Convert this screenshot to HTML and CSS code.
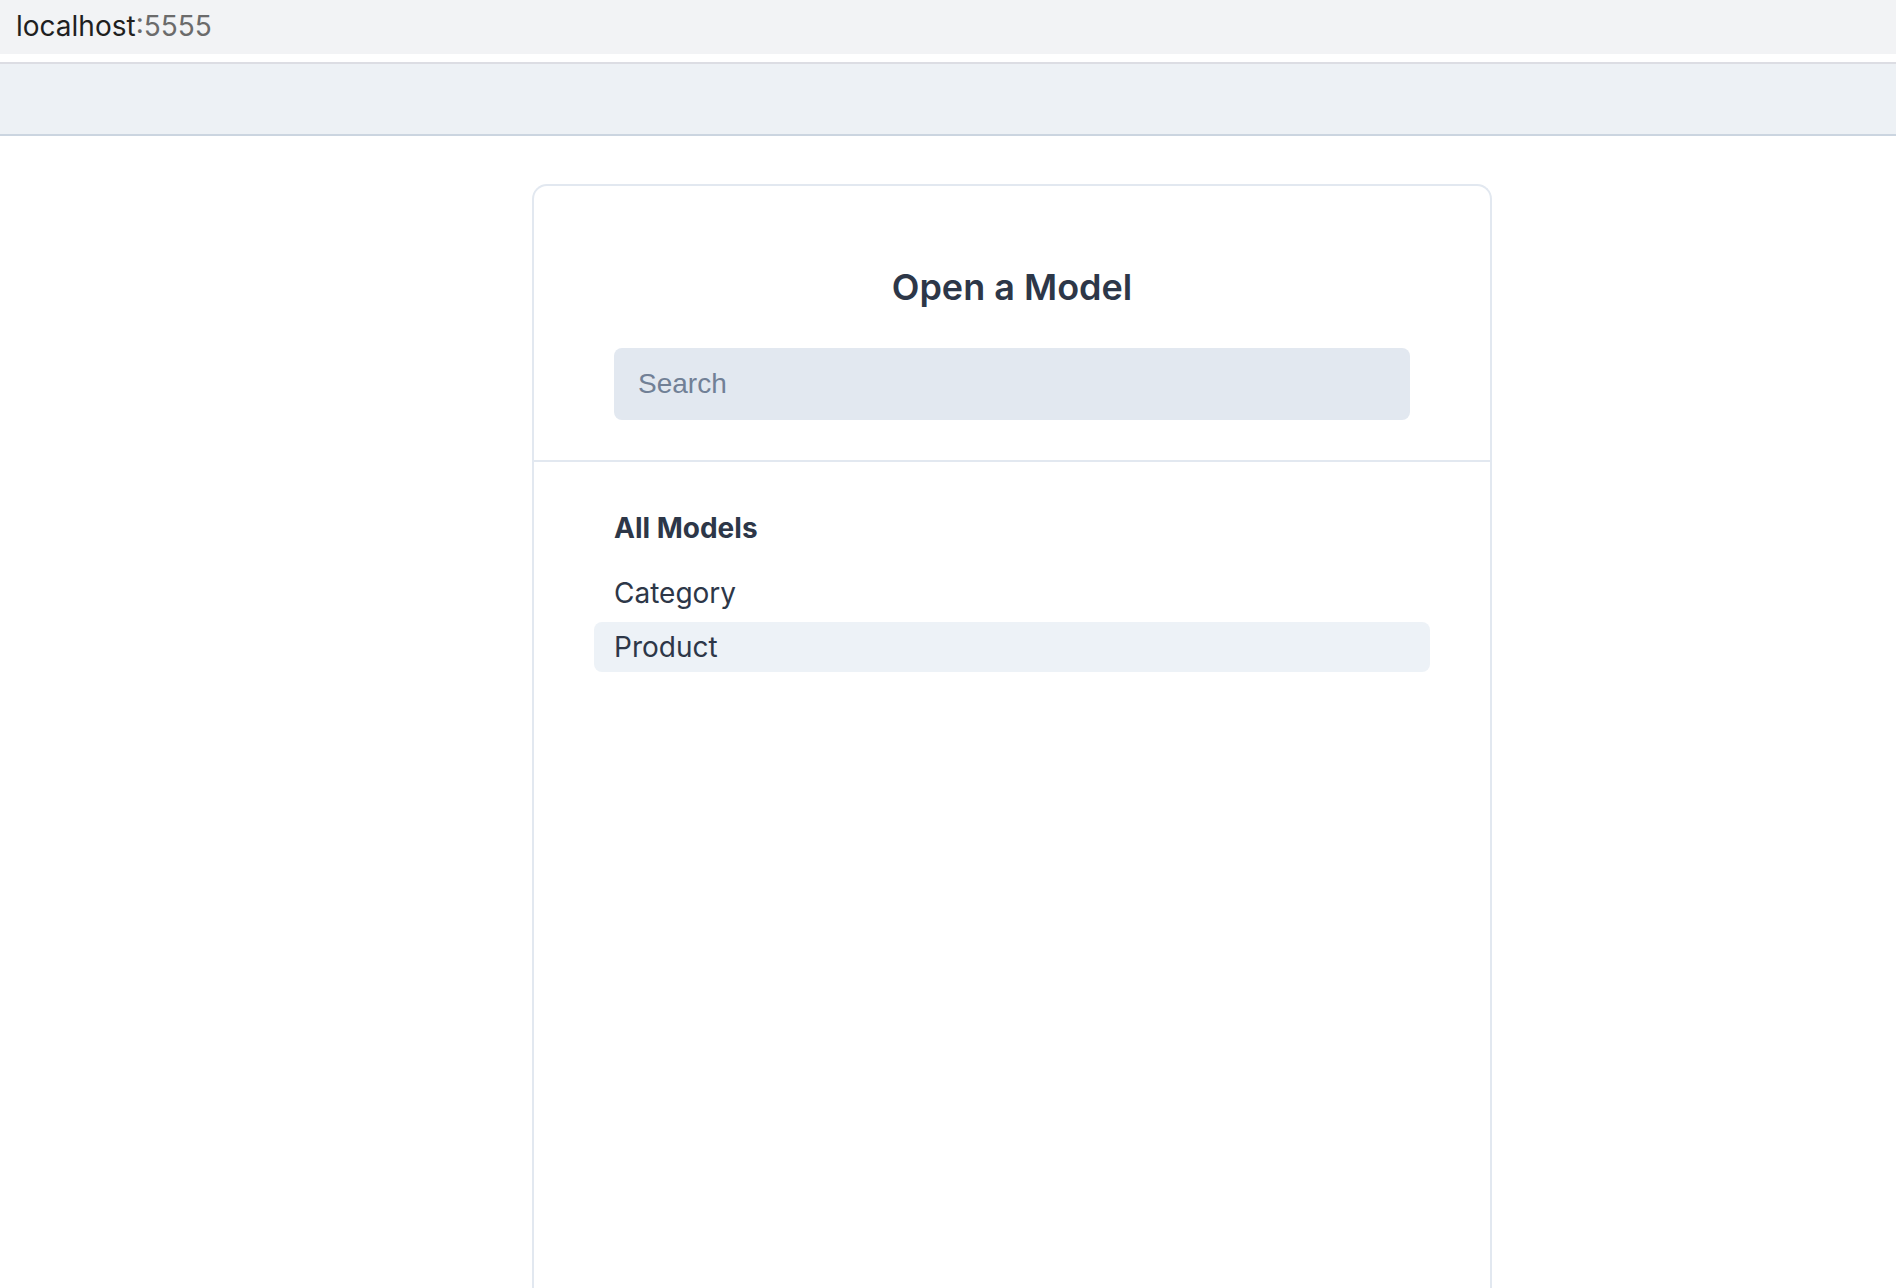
FILE: index.html
```html
<!DOCTYPE html>
<html lang="en">
<head>
<meta charset="utf-8">
<title>Open a Model</title>
<link rel="stylesheet" href="styles.css">
</head>
<body>
<div class="urlbar"><span class="host">localhost</span><span class="port">:5555</span></div>
<div class="urlgap"></div>
<header class="topbar"></header>
<main class="main">
  <section class="card">
    <div class="card-head">
      <h1 class="title">Open a Model</h1>
      <input class="search" type="text" placeholder="Search">
    </div>
    <div class="card-body">
      <div class="group-label">All Models</div>
      <ul class="model-list">
        <li class="model-item">Category</li>
        <li class="model-item is-active">Product</li>
      </ul>
    </div>
  </section>
</main>
</body>
</html>
```
FILE: styles.css
```css
* { box-sizing: border-box; }
html, body { margin: 0; padding: 0; background: #ffffff; overflow: hidden; }
body { font-family: Inter, "Noto Sans", sans-serif; color: #2d3748; height: 1288px; }

.urlbar {
  height: 54px;
  background: #f2f3f5;
  display: flex;
  align-items: center;
  padding-left: 16px;
  font-size: 28px;
  padding-bottom: 2px;
}
.host { color: #1f1f1f; }
.port { color: #6b6b6b; }
.urlgap { height: 8px; background: #ffffff; }

.topbar {
  height: 74px;
  background: #edf1f5;
  border-top: 2px solid #dcdde3;
  border-bottom: 2px solid #cbd5e0;
}

.main { padding-top: 48px; padding-left: 532px; }

.card {
  width: 960px;
  min-height: 1200px;
  border: 2px solid #e2e8f0;
  border-bottom: none;
  border-radius: 15px 15px 0 0;
  background: #ffffff;
}

.card-head {
  padding: 79px 80px 40px 80px;
  border-bottom: 2px solid #e2e8f0;
  display: flex;
  flex-direction: column;
  gap: 39px;
}
.title {
  margin: 0;
  text-align: center;
  font-size: 36px;
  line-height: 44px;
  font-weight: 600;
  color: #2d3748;
}
.search {
  width: 796px;
  height: 72px;
  border: none;
  outline: none;
  border-radius: 8px;
  background: #e2e8f0;
  padding: 0 24px;
  font-family: "Liberation Sans", Arial, sans-serif;
  font-size: 28px;
  color: #2d3748;
}
.search::placeholder { color: #718096; opacity: 1; }

.card-body { padding: 41px 60px 0 60px; }
.group-label {
  height: 50px;
  display: flex;
  align-items: center;
  padding-left: 20px;
  font-size: 28px;
  font-weight: 700;
  margin-bottom: 15px;
}
.model-list {
  list-style: none;
  margin: 0;
  padding: 0;
  display: flex;
  flex-direction: column;
  gap: 4px;
}
.model-item {
  height: 50px;
  display: flex;
  align-items: center;
  padding-left: 20px;
  font-size: 28px;
  border-radius: 8px;
}
.model-item.is-active { background: #edf2f7; }
```
